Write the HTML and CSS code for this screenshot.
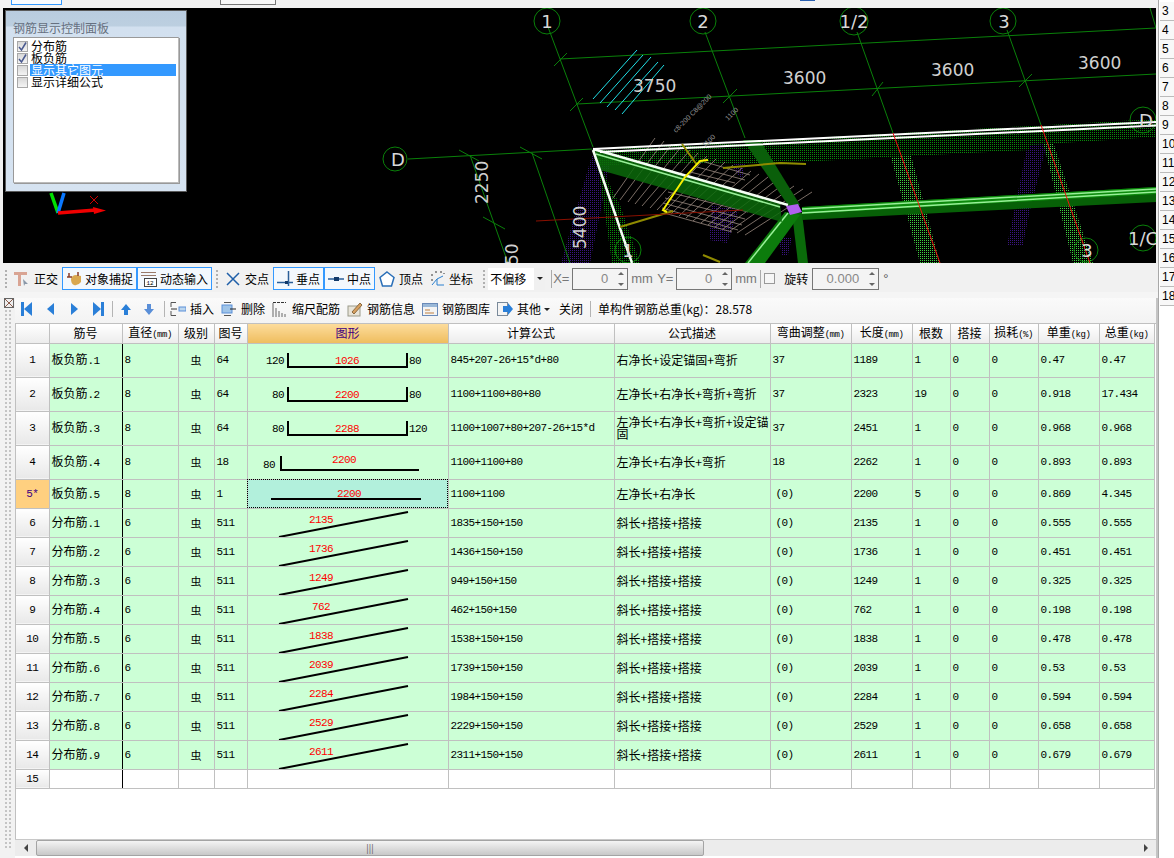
FILE: index.html
```html
<!DOCTYPE html>
<html lang="zh-CN">
<head>
    <meta charset="UTF-8">
    <title>钢筋编辑</title>
    <link rel="stylesheet" href="styles.css">
</head>
<body>
<div class="app">
    <div class="main">
        <div class="top-strip">
            <span class="stub stub-a"></span>
            <span class="stub stub-b"></span>
            <span class="stub stub-c"></span>
        </div>

        <div class="view">
            <svg class="scene" viewBox="3 8 1153 255" width="1153" height="255">
                <defs>
                    <pattern id="dg" width="2" height="2" patternUnits="userSpaceOnUse"><rect width="1" height="1" fill="#0a8a0a"/></pattern>
                    <pattern id="lg" width="2" height="2" patternUnits="userSpaceOnUse"><rect width="1" height="1" fill="#3fd03f"/></pattern>
                    <pattern id="pp" width="2" height="2" patternUnits="userSpaceOnUse"><rect width="1" height="1" fill="#3a1480"/></pattern>
                </defs>

                <!-- stippled columns -->
                <polygon fill="url(#pp)" points="592,155 612,155 590,263 561,263"/>
                <polygon fill="url(#dg)" points="597,160 620,205 640,263 612,263"/>
                <polygon fill="url(#pp)" points="712,206 740,208 727,243 709,240"/>
                <polygon fill="url(#pp)" points="732,167 748,147 742,180"/>
                <polygon fill="url(#pp)" points="778,237 792,237 788,255 782,255"/>
                <polygon fill="url(#pp)" points="1030,132 1050,132 1030,210 1023,245 1007,245 1013,217"/>
                <polygon fill="url(#lg)" points="887,143 905,133 940,263 920,263"/>
                <polygon fill="url(#lg)" points="1040,130 1050,133 1093,263 1073,263"/>
                <polygon fill="url(#dg)" points="593,150 1156,119 1156,137 1030,145 1030,150 780,163 600,165"/>

                <!-- axis lines -->
                <g class="axis">
                    <path d="M548 27L593 147M532 153L570 263M470 155L508 263M705 32L745 138M857 32L893 133M1007 30L1041 125M1150 8L1156 28"/>
                    <path d="M560 59L1156 28M577 104L1156 74M408 159L592 149"/>
                    <path d="M554 66L567 53M570 111L583 98M723 103L737 89M872 96L883 82M1019 87L1032 74M459 150L479 161M520 147L542 159M483 217L505 229"/>
                    <circle cx="547" cy="21" r="13"/>
                    <circle cx="703" cy="21" r="13"/>
                    <circle cx="854" cy="21" r="14"/>
                    <circle cx="1003" cy="21" r="13"/>
                    <circle cx="395" cy="159" r="12"/>
                    <circle cx="628" cy="250" r="13"/>
                    <circle cx="1143" cy="120" r="13"/>
                    <circle cx="1143" cy="238" r="13"/>
                    <circle cx="1086" cy="250" r="12"/>
                </g>

                <path class="cyan" d="M637 50L593 99M643 55L600 103M651 57L607 107M658 62L615 110M664 65L622 114"/>

                <!-- slab bars -->
                <path class="bars" d="M613 198L655 138M620 200L664 141M628 202L672 144M635 204L681 147M642 206L690 150M650 208L698 153M657 210L707 156M664 212L716 159M671 214L725 162M679 216L733 165M686 218L742 168M693 221L751 171M701 223L759 174M708 225L768 177M715 227L777 180M723 229L785 183M730 231L794 186M737 233L803 189M745 235L812 192"/>
                <path class="bars" d="M668 192L748 212M665 198L745 219M663 203L742 225M662 208L738 230M664 213L732 232M690 172L735 183M697 167L745 180M705 162L750 175"/>

                <!-- beams -->
                <polygon fill="#0a5f0a" points="743,140 760,140 800,205 790,208"/>
                <polygon fill="#0a6a0a" points="792,213 802,213 808,263 798,263"/>
                <polygon fill="#0c7c0c" points="785,212 800,215 765,263 745,263"/>
                <path class="mint" d="M788 213L748 263"/>
                <polygon fill="#0a6a0a" opacity="0.85" points="593,150 780,203 782,222 600,170"/>
                <polygon fill="#076007" points="802,207 1156,187 1156,202 802,220"/>
                <polygon fill="#0c8a0c" points="802,207 1156,187 1156,194 802,214"/>
                <path class="mint" d="M802 213L1156 192M802 209L1156 189M596 154L780 207"/>
                <path class="white" d="M593 149L788 205M593 150L632 263"/>
                <path class="white-top" d="M593 149L1156 122M600 152L1156 125.500"/>

                <path class="olive" d="M682 144L697 165M723 168L780 163L806 164M620 227L673 211M703 255L720 262"/>
                <path class="yellow" d="M708 160L700 161L685 177L663 210L667 212"/>
                <path class="dark-red" d="M536 221L743 210"/>
                <path class="red" d="M893 133L940 263M1041 125L1090 263"/>
                <polygon fill="#b060f0" points="786,206 798,204 802,212 790,215"/>

                <!-- labels -->
                <g class="dim">
                    <text x="633" y="92">3750</text>
                    <text x="783" y="84">3600</text>
                    <text x="931" y="76">3600</text>
                    <text x="1078" y="69">3600</text>
                    <text transform="translate(488 204) rotate(-90)">2250</text>
                    <text transform="translate(586 249) rotate(-90)">5400</text>
                    <text transform="translate(518 265) rotate(-90)">50</text>
                </g>
                <g class="tag">
                    <text x="547" y="28">1</text>
                    <text x="703" y="28">2</text>
                    <text x="854" y="28">1/2</text>
                    <text x="1004" y="28">3</text>
                    <text x="398" y="166">D</text>
                    <text x="628" y="257">1</text>
                    <text x="1146" y="127">D</text>
                    <text x="1143" y="245">1/C</text>
                    <text x="1087" y="257">3</text>
                </g>
                <text class="tiny" transform="translate(676 133) rotate(-45)">c8-200 C8@200</text>
                <text class="tiny" transform="translate(728 121) rotate(-45)">1100</text>
                <text class="tiny" transform="translate(705 148) rotate(-45)">1100</text>

                <!-- ucs widget -->
                <path d="M51 193L58 213" stroke="#00e000" stroke-width="3.5"/>
                <path d="M64 193L58 213" stroke="#0a78ff" stroke-width="3.5"/>
                <path d="M58 213L96 210" stroke="#f00000" stroke-width="3.5"/>
                <polygon fill="#f00000" points="93,207 106,210.500 94,214"/>
                <path d="M90 196L98 204M98 196L90 204" stroke="#d00000"/>
            </svg>

            <div class="panel">
                <div class="panel-title">钢筋显示控制面板</div>
                <div class="panel-list">
                    <div class="check-row"><span class="cb"><svg width="9" height="9" viewBox="0 0 9 9"><path d="M1 5L3.500 8L8 0.500" fill="none" stroke="#4a5a90" stroke-width="1.500"/></svg></span><span class="check-label">分布筋</span></div>
                    <div class="check-row"><span class="cb"><svg width="9" height="9" viewBox="0 0 9 9"><path d="M1 5L3.500 8L8 0.500" fill="none" stroke="#4a5a90" stroke-width="1.500"/></svg></span><span class="check-label">板负筋</span></div>
                    <div class="check-row"><span class="cb"></span><span class="check-label selected">显示其它图元</span></div>
                    <div class="check-row"><span class="cb"></span><span class="check-label">显示详细公式</span></div>
                </div>
            </div>
        </div>

        <div class="bar-one">
            <span class="grip"></span>
            <div class="tool">
                <svg width="16" height="16" viewBox="0 0 16 16"><path d="M0 1H13V4H7V15H4V4H0Z" fill="#d9a493"/><path d="M9 8L14 13L11 13L10 15Z" fill="#8a98a8"/></svg>
                <span>正交</span>
            </div>
            <div class="tool on">
                <svg width="16" height="16" viewBox="0 0 16 16"><path d="M5 8Q6 4 10 4L15 5L15 11Q12 15 8 14Q5 13 5 8Z" fill="#d9a850"/><path d="M1 6H6M3 2V6M12 1V5" stroke="#8a3c28" stroke-width="1.500"/></svg>
                <span>对象捕捉</span>
            </div>
            <div class="tool on">
                <svg width="16" height="16" viewBox="0 0 16 16"><path d="M0 1.500H15M0 4.500H15" stroke="#9a7a6a"/><rect x="3.500" y="7.500" width="12" height="8" fill="#fff" stroke="#444"/><text x="5.500" y="14" class="icon-num">12</text></svg>
                <span>动态输入</span>
            </div>
            <span class="grip grip-b"></span>
            <div class="tool">
                <svg width="16" height="16" viewBox="0 0 16 16"><path d="M2 2L14 14M14 2L2 14" stroke="#1f5fa8" stroke-width="1.500"/></svg>
                <span>交点</span>
            </div>
            <div class="tool on">
                <svg width="16" height="16" viewBox="0 0 16 16"><path d="M0 11.500H16" stroke="#2a5f98" stroke-width="1.500"/><path d="M11.500 0V15" stroke="#2a5f98" stroke-width="1.500"/><rect x="8" y="10" width="3" height="3" fill="#123a6a"/></svg>
                <span>垂点</span>
            </div>
            <div class="tool on">
                <svg width="16" height="16" viewBox="0 0 16 16"><path d="M0 8H16" stroke="#2a5f98" stroke-width="1.500"/><rect x="6" y="6" width="5" height="4" fill="#123a6a"/></svg>
                <span>中点</span>
            </div>
            <div class="tool">
                <svg width="16" height="16" viewBox="0 0 16 16"><path d="M8 1L15 6.500L12.500 15H3.500L1 6.500Z" fill="#fff" stroke="#2a6fb8" stroke-width="1.500"/></svg>
                <span>顶点</span>
            </div>
            <div class="tool coord">
                <svg width="14" height="16" viewBox="0 0 14 16"><path d="M1 14L6 8L12 5M6 8V14H13" fill="none" stroke="#2a80d0"/><path d="M1 3V5M1 8V10M4 1H6M9 1H11M13 2V3" stroke="#333"/></svg>
                <span>坐标</span>
            </div>
            <span class="grip grip-c"></span>
            <div class="combo"><span>不偏移</span><span class="combo-arrow"></span></div>
            <span class="divider divider-a"></span>
            <span class="lbl lbl-x">X=</span>
            <div class="spin"><span class="spin-val">0</span><span class="spin-btns"><i class="up"></i><i class="down"></i></span></div>
            <span class="lbl lbl-mm">mm</span>
            <span class="lbl lbl-y">Y=</span>
            <div class="spin"><span class="spin-val">0</span><span class="spin-btns"><i class="up"></i><i class="down"></i></span></div>
            <span class="lbl lbl-mm">mm</span>
            <span class="divider"></span>
            <span class="box"></span>
            <span class="rotate">旋转</span>
            <div class="spin spin-wide"><span class="spin-val">0.000</span><span class="spin-btns"><i class="up"></i><i class="down"></i></span></div>
            <span class="lbl lbl-deg">°</span>
        </div>

        <div class="bar-gap"></div>

        <div class="editor">
            <div class="gutter">
                <svg class="close-icon" width="10" height="10" viewBox="0 0 10 10"><rect x="0.500" y="0.500" width="9" height="9" fill="#eee" stroke="#666"/><path d="M1 1L9 9M9 1L1 9" stroke="#8a5a4a"/></svg>
                <div class="dots"></div>
            </div>
            <div class="editor-body">
                <div class="bar-two">
                    <svg class="nav nav-first" width="11" height="14" viewBox="0 0 11 14"><rect width="3" height="14" fill="#2a7fd8"/><polygon points="11,0 11,14 3,7" fill="#2a7fd8"/></svg>
                    <svg class="nav" width="11" height="14" viewBox="0 0 11 14"><polygon points="9,1 9,13 2,7" fill="#2a7fd8"/></svg>
                    <svg class="nav" width="11" height="14" viewBox="0 0 11 14"><polygon points="2,1 2,13 9,7" fill="#2a7fd8"/></svg>
                    <svg class="nav nav-last" width="11" height="14" viewBox="0 0 11 14"><rect x="8" width="3" height="14" fill="#2a7fd8"/><polygon points="0,0 0,14 8,7" fill="#2a7fd8"/></svg>
                    <span class="sep"></span>
                    <svg class="arrow arrow-up" width="10" height="11" viewBox="0 0 10 11"><path d="M5 0L10 6H7V11H3V6H0Z" fill="#2a7fd8"/></svg>
                    <svg class="arrow arrow-down" width="10" height="11" viewBox="0 0 10 11"><path d="M5 11L10 5H7V0H3V5H0Z" fill="#5a8fd8"/></svg>
                    <span class="sep sep-b"></span>
                    <div class="act act-first">
                        <svg width="16" height="16" viewBox="0 0 16 16"><path d="M6 1.500H1V6M6 14.500H1V10" fill="none" stroke="#555"/><path d="M1 8H7" stroke="#333"/><rect x="9" y="6" width="7" height="4" fill="#bcd6ee" stroke="#5a8fd8"/></svg>
                        <span>插入</span>
                    </div>
                    <div class="act">
                        <svg width="16" height="16" viewBox="0 0 16 16"><path d="M3 1.500H10M3 14.500H10" stroke="#555"/><rect x="1" y="4" width="10" height="8" fill="#9fc4e8" stroke="#5a8fd8"/><path d="M9 8H15" stroke="#222"/></svg>
                        <span>删除</span>
                    </div>
                    <div class="act">
                        <svg width="16" height="16" viewBox="0 0 16 16"><path d="M1 2V16M4 7V16M7 10V16M10 12V16M13 13V16" stroke="#666"/><path d="M1 1.500H14" stroke="#333" stroke-dasharray="3 1"/></svg>
                        <span>缩尺配筋</span>
                    </div>
                    <div class="act">
                        <svg width="16" height="16" viewBox="0 0 16 16"><rect x="1" y="5" width="12" height="10" fill="#e8e4d8" stroke="#9a9a8a"/><path d="M5 11L13 2L15 4L7 13Z" fill="#d8a060" stroke="#8a6a40"/></svg>
                        <span>钢筋信息</span>
                    </div>
                    <div class="act">
                        <svg width="16" height="16" viewBox="0 0 16 16"><rect x="0.500" y="2.500" width="15" height="12" fill="#f4f4f4" stroke="#6a8ab8"/><rect x="1" y="3" width="14" height="3" fill="#9ab8d8"/><path d="M3 9H8M3 12H12" stroke="#c08040"/></svg>
                        <span>钢筋图库</span>
                    </div>
                    <div class="act">
                        <svg width="16" height="16" viewBox="0 0 16 16"><rect x="0.500" y="1.500" width="10" height="13" fill="#f4f4f4" stroke="#7a8a9a"/><path d="M6 5H11V2L16 8L11 14V11H6Z" fill="#2a7fd8"/></svg>
                        <span>其他</span>
                        <i class="caret"></i>
                    </div>
                    <div class="act act-close"><span>关闭</span></div>
                    <span class="sep sep-c"></span>
                    <span class="total">单构件钢筋总重(kg)：28.578</span>
                </div>

                <div class="grid-wrap">
                    <table class="grid">
                        <colgroup>
                            <col class="c-idx"><col class="c-name"><col class="c-dia"><col class="c-grade"><col class="c-fig">
                            <col class="c-shape"><col class="c-calc"><col class="c-desc"><col class="c-bend"><col class="c-len">
                            <col class="c-count"><col class="c-lap"><col class="c-loss"><col class="c-unit"><col class="c-sum">
                        </colgroup>
                        <thead>
                            <tr>
                                <th></th>
                                <th class="freeze">筋号</th>
                                <th>直径<small>(mm)</small></th>
                                <th>级别</th>
                                <th>图号</th>
                                <th class="active">图形</th>
                                <th>计算公式</th>
                                <th>公式描述</th>
                                <th>弯曲调整<small>(mm)</small></th>
                                <th>长度<small>(mm)</small></th>
                                <th>根数</th>
                                <th>搭接</th>
                                <th>损耗<small>(%)</small></th>
                                <th>单重<small>(kg)</small></th>
                                <th>总重<small>(kg)</small></th>
                            </tr>
                        </thead>
                        <tbody>
                            <tr class="tall">
                                <th>1</th><td class="freeze">板负筋<span class="num">.1</span></td><td class="num">8</td><td class="grade">虫</td><td class="num">64</td>
                                <td class="shape"><svg width="200" height="33"><path class="rebar" d="M40 9V23H159V9"/><text class="side-len" x="36" y="20" text-anchor="end">120</text><text class="side-len" x="161" y="20">80</text><text class="bar-len" x="99" y="20" text-anchor="middle">1026</text></svg></td>
                                <td class="num">845+207-26+15*d+80</td><td class="desc">右净长+设定锚固+弯折</td><td class="num">37</td><td class="num">1189</td><td class="num">1</td><td class="num">0</td><td class="num">0</td><td class="num">0.47</td><td class="num">0.47</td>
                            </tr>
                            <tr class="tall">
                                <th>2</th><td class="freeze">板负筋<span class="num">.2</span></td><td class="num">8</td><td class="grade">虫</td><td class="num">64</td>
                                <td class="shape"><svg width="200" height="33"><path class="rebar" d="M40 9V23H159V9"/><text class="side-len" x="36" y="20" text-anchor="end">80</text><text class="side-len" x="161" y="20">80</text><text class="bar-len" x="99" y="20" text-anchor="middle">2200</text></svg></td>
                                <td class="num">1100+1100+80+80</td><td class="desc">左净长+右净长+弯折+弯折</td><td class="num">37</td><td class="num">2323</td><td class="num">19</td><td class="num">0</td><td class="num">0</td><td class="num">0.918</td><td class="num">17.434</td>
                            </tr>
                            <tr class="tall">
                                <th>3</th><td class="freeze">板负筋<span class="num">.3</span></td><td class="num">8</td><td class="grade">虫</td><td class="num">64</td>
                                <td class="shape"><svg width="200" height="33"><path class="rebar" d="M40 9V23H159V9"/><text class="side-len" x="36" y="20" text-anchor="end">80</text><text class="side-len" x="161" y="20">120</text><text class="bar-len" x="99" y="20" text-anchor="middle">2288</text></svg></td>
                                <td class="num">1100+1007+80+207-26+15*d</td><td class="desc">左净长+右净长+弯折+设定锚固</td><td class="num">37</td><td class="num">2451</td><td class="num">1</td><td class="num">0</td><td class="num">0</td><td class="num">0.968</td><td class="num">0.968</td>
                            </tr>
                            <tr class="tall">
                                <th>4</th><td class="freeze">板负筋<span class="num">.4</span></td><td class="num">8</td><td class="grade">虫</td><td class="num">18</td>
                                <td class="shape"><svg width="200" height="33"><path class="rebar" d="M33 10V24H171"/><text class="side-len" x="15" y="22">80</text><text class="bar-len" x="96" y="17" text-anchor="middle">2200</text></svg></td>
                                <td class="num">1100+1100+80</td><td class="desc">左净长+右净长+弯折</td><td class="num">18</td><td class="num">2262</td><td class="num">1</td><td class="num">0</td><td class="num">0</td><td class="num">0.893</td><td class="num">0.893</td>
                            </tr>
                            <tr class="mid">
                                <th class="current">5*</th><td class="freeze">板负筋<span class="num">.5</span></td><td class="num">8</td><td class="grade">虫</td><td class="num">1</td>
                                <td class="shape focus"><svg width="200" height="28"><path class="rebar" d="M23 19H173"/><text class="bar-len" x="101" y="17" text-anchor="middle">2200</text></svg></td>
                                <td class="num">1100+1100</td><td class="desc">左净长+右净长</td><td class="num zero">(0)</td><td class="num">2200</td><td class="num">5</td><td class="num">0</td><td class="num">0</td><td class="num">0.869</td><td class="num">4.345</td>
                            </tr>
                            <tr class="mid">
                                <th>6</th><td class="freeze">分布筋<span class="num">.1</span></td><td class="num">6</td><td class="grade">虫</td><td class="num">511</td>
                                <td class="shape"><svg width="200" height="28"><path class="rebar" d="M31 28L160 3"/><text class="bar-len" x="73" y="14" text-anchor="middle">2135</text></svg></td>
                                <td class="num">1835+150+150</td><td class="desc">斜长+搭接+搭接</td><td class="num zero">(0)</td><td class="num">2135</td><td class="num">1</td><td class="num">0</td><td class="num">0</td><td class="num">0.555</td><td class="num">0.555</td>
                            </tr>
                            <tr class="mid">
                                <th>7</th><td class="freeze">分布筋<span class="num">.2</span></td><td class="num">6</td><td class="grade">虫</td><td class="num">511</td>
                                <td class="shape"><svg width="200" height="28"><path class="rebar" d="M31 28L160 3"/><text class="bar-len" x="73" y="14" text-anchor="middle">1736</text></svg></td>
                                <td class="num">1436+150+150</td><td class="desc">斜长+搭接+搭接</td><td class="num zero">(0)</td><td class="num">1736</td><td class="num">1</td><td class="num">0</td><td class="num">0</td><td class="num">0.451</td><td class="num">0.451</td>
                            </tr>
                            <tr class="mid">
                                <th>8</th><td class="freeze">分布筋<span class="num">.3</span></td><td class="num">6</td><td class="grade">虫</td><td class="num">511</td>
                                <td class="shape"><svg width="200" height="28"><path class="rebar" d="M31 28L160 3"/><text class="bar-len" x="73" y="14" text-anchor="middle">1249</text></svg></td>
                                <td class="num">949+150+150</td><td class="desc">斜长+搭接+搭接</td><td class="num zero">(0)</td><td class="num">1249</td><td class="num">1</td><td class="num">0</td><td class="num">0</td><td class="num">0.325</td><td class="num">0.325</td>
                            </tr>
                            <tr class="mid">
                                <th>9</th><td class="freeze">分布筋<span class="num">.4</span></td><td class="num">6</td><td class="grade">虫</td><td class="num">511</td>
                                <td class="shape"><svg width="200" height="28"><path class="rebar" d="M31 28L160 3"/><text class="bar-len" x="73" y="14" text-anchor="middle">762</text></svg></td>
                                <td class="num">462+150+150</td><td class="desc">斜长+搭接+搭接</td><td class="num zero">(0)</td><td class="num">762</td><td class="num">1</td><td class="num">0</td><td class="num">0</td><td class="num">0.198</td><td class="num">0.198</td>
                            </tr>
                            <tr class="mid">
                                <th>10</th><td class="freeze">分布筋<span class="num">.5</span></td><td class="num">6</td><td class="grade">虫</td><td class="num">511</td>
                                <td class="shape"><svg width="200" height="28"><path class="rebar" d="M31 28L160 3"/><text class="bar-len" x="73" y="14" text-anchor="middle">1838</text></svg></td>
                                <td class="num">1538+150+150</td><td class="desc">斜长+搭接+搭接</td><td class="num zero">(0)</td><td class="num">1838</td><td class="num">1</td><td class="num">0</td><td class="num">0</td><td class="num">0.478</td><td class="num">0.478</td>
                            </tr>
                            <tr class="mid">
                                <th>11</th><td class="freeze">分布筋<span class="num">.6</span></td><td class="num">6</td><td class="grade">虫</td><td class="num">511</td>
                                <td class="shape"><svg width="200" height="28"><path class="rebar" d="M31 28L160 3"/><text class="bar-len" x="73" y="14" text-anchor="middle">2039</text></svg></td>
                                <td class="num">1739+150+150</td><td class="desc">斜长+搭接+搭接</td><td class="num zero">(0)</td><td class="num">2039</td><td class="num">1</td><td class="num">0</td><td class="num">0</td><td class="num">0.53</td><td class="num">0.53</td>
                            </tr>
                            <tr class="mid">
                                <th>12</th><td class="freeze">分布筋<span class="num">.7</span></td><td class="num">6</td><td class="grade">虫</td><td class="num">511</td>
                                <td class="shape"><svg width="200" height="28"><path class="rebar" d="M31 28L160 3"/><text class="bar-len" x="73" y="14" text-anchor="middle">2284</text></svg></td>
                                <td class="num">1984+150+150</td><td class="desc">斜长+搭接+搭接</td><td class="num zero">(0)</td><td class="num">2284</td><td class="num">1</td><td class="num">0</td><td class="num">0</td><td class="num">0.594</td><td class="num">0.594</td>
                            </tr>
                            <tr class="mid">
                                <th>13</th><td class="freeze">分布筋<span class="num">.8</span></td><td class="num">6</td><td class="grade">虫</td><td class="num">511</td>
                                <td class="shape"><svg width="200" height="28"><path class="rebar" d="M31 28L160 3"/><text class="bar-len" x="73" y="14" text-anchor="middle">2529</text></svg></td>
                                <td class="num">2229+150+150</td><td class="desc">斜长+搭接+搭接</td><td class="num zero">(0)</td><td class="num">2529</td><td class="num">1</td><td class="num">0</td><td class="num">0</td><td class="num">0.658</td><td class="num">0.658</td>
                            </tr>
                            <tr class="mid">
                                <th>14</th><td class="freeze">分布筋<span class="num">.9</span></td><td class="num">6</td><td class="grade">虫</td><td class="num">511</td>
                                <td class="shape"><svg width="200" height="28"><path class="rebar" d="M31 28L160 3"/><text class="bar-len" x="73" y="14" text-anchor="middle">2611</text></svg></td>
                                <td class="num">2311+150+150</td><td class="desc">斜长+搭接+搭接</td><td class="num zero">(0)</td><td class="num">2611</td><td class="num">1</td><td class="num">0</td><td class="num">0</td><td class="num">0.679</td><td class="num">0.679</td>
                            </tr>
                            <tr class="blank">
                                <th>15</th><td class="freeze"></td><td></td><td></td><td></td><td></td><td></td><td></td><td></td><td></td><td></td><td></td><td></td><td></td><td></td>
                            </tr>
                        </tbody>
                    </table>
                </div>

                <div class="hscroll">
                    <span class="sb-btn"><i class="sb-left"></i></span>
                    <span class="sb-thumb">|||</span>
                    <span class="sb-track"></span>
                    <span class="sb-btn sb-btn-r"><i class="sb-right"></i></span>
                </div>
            </div>
        </div>
    </div>

    <div class="side">
        <div class="side-row">3</div>
        <div class="side-row">4</div>
        <div class="side-row">5</div>
        <div class="side-row">6</div>
        <div class="side-row">7</div>
        <div class="side-row">8</div>
        <div class="side-row">9</div>
        <div class="side-row">10</div>
        <div class="side-row">11</div>
        <div class="side-row">12</div>
        <div class="side-row">13</div>
        <div class="side-row">14</div>
        <div class="side-row">15</div>
        <div class="side-row">16</div>
        <div class="side-row">17</div>
        <div class="side-row">18</div>
    </div>
</div>
</body>
</html>
```

FILE: styles.css
```css
* {
    margin: 0;
    padding: 0;
    box-sizing: border-box;
}

body {
    width: 1174px;
    height: 858px;
    overflow: hidden;
    background-color: #fff;
    color: #000;
    font-family: "Noto Sans CJK SC", "Liberation Sans", sans-serif;
    font-size: 12px;
    line-height: 12px;
}

.app {
    display: flex;
    height: 858px;
}

.main {
    width: 1159px;
    display: flex;
    flex-direction: column;
    background-color: #f0f0f0;
    border-right: 1px solid #a8a8a8;
}

.top-strip {
    height: 8px;
    display: flex;
    align-items: flex-start;
    background-color: #f2f2f2;
}

.stub {
    display: block;
    height: 5px;
}

.stub-a {
    width: 51px;
    margin-left: 11px;
    background-color: #f8fbff;
    border: 1px solid #3399ff;
    border-top: none;
}

.stub-b {
    width: 56px;
    margin-left: 158px;
    background-color: #f8f8f8;
    border: 1px solid #777;
    border-top: none;
}

.stub-c {
    width: 15px;
    height: 1px;
    margin-left: 524px;
    background-color: #2a5fb0;
}

/* 3d view */
.view {
    position: relative;
    width: 1153px;
    height: 255px;
    margin-left: 3px;
    background-color: #000;
}

.scene {
    display: block;
}

.axis {
    fill: none;
    stroke: #0a800a;
    stroke-width: 1;
}

.cyan {
    fill: none;
    stroke: #20e0e8;
}

.bars {
    fill: none;
    stroke: #9a8a80;
    stroke-width: 0.8;
}

.mint {
    fill: none;
    stroke: #98f098;
    stroke-width: 1.5;
}

.white {
    fill: none;
    stroke: #f4fff4;
    stroke-width: 2.5;
}

.white-top {
    fill: none;
    stroke: #fff;
    stroke-width: 2;
}

.olive {
    fill: none;
    stroke: #8f8a00;
    stroke-width: 2;
}

.yellow {
    fill: none;
    stroke: #f8f000;
    stroke-width: 2;
}

.dark-red {
    stroke: #8a1000;
}

.red {
    stroke: #f01010;
}

.dim text {
    font-family: "DejaVu Sans", sans-serif;
    font-size: 17px;
    fill: #d0d0d0;
}

.tag text {
    font-family: "DejaVu Sans", sans-serif;
    font-size: 18px;
    fill: #d8d8d8;
    text-anchor: middle;
}

.tiny {
    font-family: "Liberation Sans", sans-serif;
    font-size: 7px;
    fill: #999;
}

/* floating panel */
.panel {
    position: absolute;
    left: 2px;
    top: 2px;
    width: 182px;
    height: 182px;
    padding: 1px;
    background: linear-gradient(#b9ccdf 0, #bccfe0 15px, #d2e0ef 16px, #d6e3f1 100%);
    border: 1px solid #5a5a5a;
}

.panel-title {
    height: 25px;
    padding: 10px 0 0 6px;
    color: #667080;
}

.panel-list {
    width: 166px;
    height: 146px;
    margin-left: 6px;
    padding: 2px 2px 0 3px;
    background-color: #fff;
    border: 1px solid;
    border-color: #999 #bbb #bbb #999;
    box-shadow: 1px 1px 0 #999;
}

.check-row {
    display: flex;
    align-items: center;
    height: 12px;
    font-size: 12px;
}

.cb {
    display: block;
    width: 11px;
    height: 11px;
    flex: none;
    background: linear-gradient(#d8d8d8, #f4f4f4);
    border: 1px solid #a8a8a8;
}

.cb svg {
    display: block;
}

.check-label {
    flex: 1;
    margin-left: 2px;
    padding-left: 1px;
    line-height: 12px;
}

.selected {
    background-color: #3399ff;
    color: #fff;
}

/* snap toolbar */
.bar-one {
    display: flex;
    align-items: center;
    height: 29px;
    padding: 2px 0 0 5px;
    background-color: #f1f1f1;
}

.grip {
    width: 4px;
    height: 18px;
    margin-right: 1px;
    background-image: radial-gradient(circle at 1px 1px, #b0b0b0 1px, transparent 1px);
    background-size: 4px 4px;
}

.grip-b {
    margin-left: 4px;
}

.grip-c {
    margin-left: 6px;
}

.tool {
    display: flex;
    align-items: center;
    gap: 4px;
    height: 23px;
    padding: 0 4px;
}

.tool.on {
    gap: 3px;
    padding: 0 3px;
    background-color: #f3f8fd;
    border: 1px solid #3399ff;
}

.icon-num {
    font-family: "Liberation Mono", monospace;
    font-size: 6px;
}

.combo {
    display: flex;
    align-items: center;
    justify-content: space-between;
    width: 57px;
    height: 22px;
    padding-left: 2px;
    background: linear-gradient(90deg, #fff 46px, #f0f0f0 46px);
}

.combo-arrow {
    width: 0;
    height: 0;
    margin-right: 2px;
    border: 3px solid transparent;
    border-top: 3px solid #222;
    border-bottom: none;
}

.divider {
    width: 1px;
    height: 18px;
    background-color: #aaa;
}

.divider-a {
    margin-left: 6px;
}

.lbl {
    color: #777;
    font-family: "Liberation Sans", sans-serif;
    font-size: 13px;
}

.lbl-x {
    width: 19px;
    margin-left: 1px;
}

.lbl-mm {
    width: 22px;
    margin-left: 3px;
    margin-right: 3px;
}

.lbl-y {
    width: 19px;
    margin-left: 1px;
}

.lbl-deg {
    margin-left: 4px;
    color: #555;
}

.spin {
    display: flex;
    align-items: center;
    width: 56px;
    height: 22px;
    background-color: #f4f4f4;
    border: 1px solid #777;
}

.spin-wide {
    width: 67px;
}

.spin-val {
    flex: 1;
    padding-right: 6px;
    text-align: right;
    color: #888;
    font-family: "Liberation Sans", sans-serif;
    font-size: 13px;
}

.spin-btns {
    display: flex;
    flex-direction: column;
    gap: 8px;
    width: 13px;
    align-items: center;
}

.spin-btns i {
    display: block;
    width: 0;
    height: 0;
    border-left: 3px solid transparent;
    border-right: 3px solid transparent;
}

.spin-btns .up {
    border-bottom: 3px solid #666;
}

.spin-btns .down {
    border-top: 3px solid #666;
}

.box {
    width: 11px;
    height: 11px;
    margin-left: 3px;
    background-color: #f6f6f6;
    border: 1px solid #999;
}

.rotate {
    margin-left: 9px;
    margin-right: 4px;
}

.bar-gap {
    height: 6px;
    background-color: #f5f5f5;
}

/* rebar editor */
.editor {
    flex: 1;
    display: flex;
    min-height: 0;
}

.gutter {
    width: 15px;
    flex: none;
    background-color: #f2f2f2;
}

.close-icon {
    display: block;
    margin-left: 4px;
}

.dots {
    width: 8px;
    height: 540px;
    margin: 2px 0 0 5px;
    background-image: radial-gradient(circle at 1px 1px, #c4c4c4 1px, transparent 1px);
    background-size: 4px 4px;
}

.editor-body {
    width: 1143px;
    display: flex;
    flex-direction: column;
    background-color: #fff;
    border-right: 2px solid #c4c4c4;
}

.bar-two {
    display: flex;
    align-items: center;
    height: 25px;
    padding: 0 0 3px 6px;
    background: linear-gradient(#fafafa, #f3f3f3);
}

.nav {
    flex: none;
    margin-right: 13px;
}

.nav-last {
    margin-right: 8px;
}

.sep {
    width: 1px;
    height: 16px;
    background-color: #b4b4b4;
}

.arrow-up {
    margin-left: 8px;
    margin-right: 13px;
}

.arrow-down {
    margin-right: 10px;
}

.sep-c {
    margin-right: 7px;
}

.act {
    display: flex;
    align-items: center;
    gap: 4px;
    margin-right: 7px;
}

.act-first {
    margin-left: 5px;
}

.act-close {
    margin-left: 2px;
}

.caret {
    width: 0;
    height: 0;
    margin-left: -1px;
    border-left: 3px solid transparent;
    border-right: 3px solid transparent;
    border-top: 3px solid #222;
}

.grid-wrap {
    flex: 1;
    min-height: 0;
    overflow: hidden;
    border-top: 1px solid #c0c0c0;
    border-left: 1px solid #c0c0c0;
}

.grid {
    width: 1138px;
    table-layout: fixed;
    border-collapse: collapse;
}

.c-idx { width: 33px; }
.c-name { width: 73px; }
.c-dia { width: 56px; }
.c-grade { width: 36px; }
.c-fig { width: 33px; }
.c-shape { width: 201px; }
.c-calc { width: 166px; }
.c-desc { width: 156px; }
.c-bend { width: 81px; }
.c-len { width: 61px; }
.c-count { width: 38px; }
.c-lap { width: 39px; }
.c-loss { width: 49px; }
.c-unit { width: 61px; }
.c-sum { width: 55px; }

.grid th,
.grid td {
    border: 1px solid #c0c0c0;
    overflow: hidden;
    white-space: nowrap;
}

.grid thead tr {
    height: 19px;
}

.grid thead th {
    background: linear-gradient(#fff, #ececec);
    font-weight: normal;
    text-align: center;
    border-top: none;
}

.grid thead th:first-child,
.grid tbody th {
    border-left: none;
}

.grid thead .active {
    background: linear-gradient(#fcdc9c, #efbd5e);
    color: #400080;
}

.grid small {
    font-family: "Liberation Mono", monospace;
    font-size: 9px;
    letter-spacing: -0.5px;
}

.grid tbody th {
    background: linear-gradient(#fff, #e8e8e8);
    font-family: "Liberation Mono", monospace;
    font-size: 11px;
    font-weight: normal;
    letter-spacing: -0.6px;
    text-align: center;
}

.grid tbody .current {
    background: #ffd080;
    color: #400080;
}

.grid td {
    padding-left: 2px;
    background-color: #ccffd6;
}

.grid .blank td {
    background-color: #fff;
}

.grid .freeze {
    border-right: 1px solid #000;
}

.grid td.freeze {
    padding-left: 2px;
}

.grid thead .freeze {
    border-right-color: #c0c0c0;
}

.tall {
    height: 34px;
}

.mid {
    height: 29px;
}

.blank {
    height: 19px;
}

.num {
    font-family: "Liberation Mono", monospace;
    font-size: 11px;
    letter-spacing: -0.6px;
}

.zero {
    padding-left: 5px !important;
}

.grade {
    padding-left: 0 !important;
    text-align: center;
    font-size: 11px;
}

.desc {
    white-space: normal !important;
}

.grid td.shape {
    padding: 0;
    vertical-align: top;
}

.shape svg {
    display: block;
}

.grid td.focus {
    background-color: #b2f0dc;
    outline: 1px dotted #000;
    outline-offset: -1px;
}

.rebar {
    fill: none;
    stroke: #000;
    stroke-width: 2;
}

.side-len {
    font-family: "Liberation Mono", monospace;
    font-size: 11px;
    letter-spacing: -0.6px;
}

.bar-len {
    font-family: "Liberation Mono", monospace;
    font-size: 11px;
    letter-spacing: -0.6px;
    fill: #f00;
}

/* scrollbar */
.hscroll {
    display: flex;
    height: 17px;
    margin-bottom: 2px;
    background-color: #ececec;
    border-top: 1px solid #c8c8c8;
}

.sb-btn {
    display: flex;
    align-items: center;
    justify-content: center;
    width: 21px;
    flex: none;
}

.sb-left {
    border-top: 4px solid transparent;
    border-bottom: 4px solid transparent;
    border-right: 4px solid #444;
}

.sb-right {
    border-top: 4px solid transparent;
    border-bottom: 4px solid transparent;
    border-left: 4px solid #444;
}

.sb-thumb {
    width: 668px;
    flex: none;
    text-align: center;
    font-size: 9px;
    line-height: 15px;
    color: #555;
    background: linear-gradient(#f4f4f4, #c8c8c8);
    border: 1px solid #a4a4a4;
    border-radius: 2px;
}

.sb-track {
    flex: 1;
}

/* sheet row numbers on the right */
.side {
    flex: 1;
    padding: 2px 0 0 1px;
    overflow: hidden;
}

.side-row {
    height: 19px;
    padding: 3px 0 0 2px;
    background-color: #f8f8f8;
    border-bottom: 1px solid #bbb;
    font-family: "Liberation Sans", sans-serif;
    font-size: 12px;
    white-space: nowrap;
}
```
